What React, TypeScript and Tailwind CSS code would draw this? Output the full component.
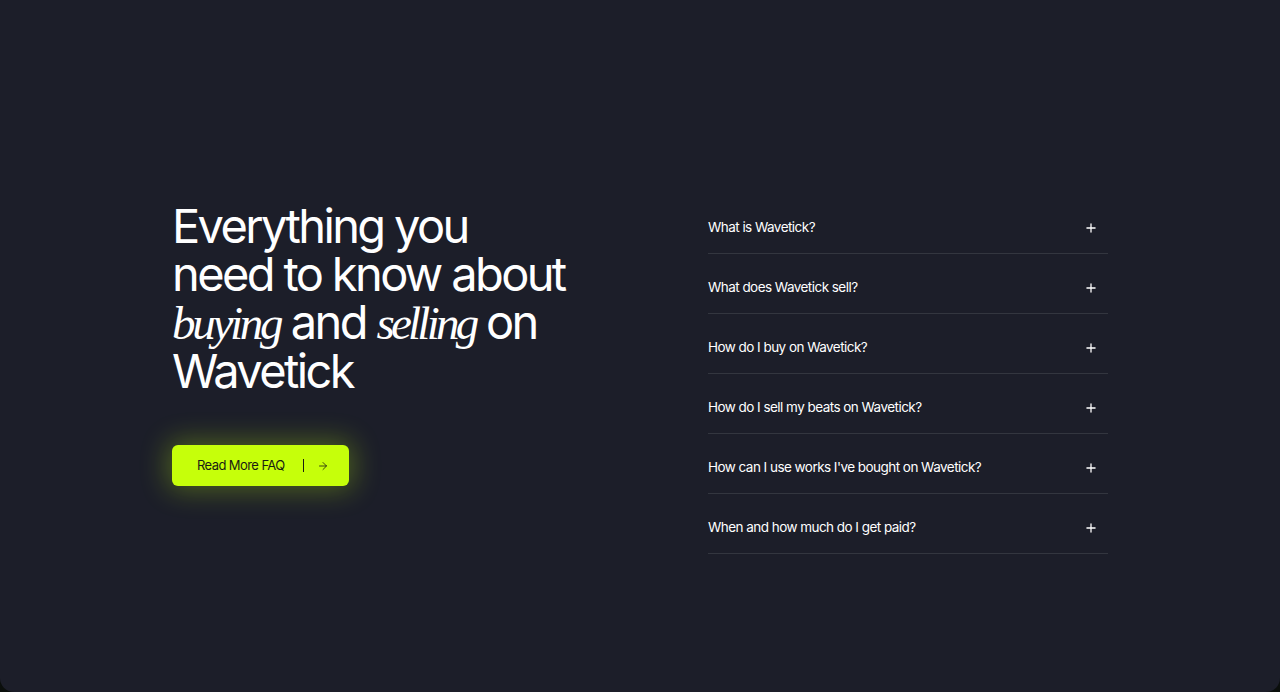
import React from "react";
import { Plus, ArrowRight } from "lucide-react";

const questions = [
  "What is Wavetick?",
  "What does Wavetick sell?",
  "How do I buy on Wavetick?",
  "How do I sell my beats on Wavetick?",
  "How can I use works I've bought on Wavetick?",
  "When and how much do I get paid?",
];

const serif = { fontFamily: "'Liberation Serif', serif" };

export default function App() {
  return (
    <div className="bg-[#0b0f0c] h-[692px] w-full">
      <div
        className="h-full w-full bg-[#1c1e29] rounded-b-[14px] overflow-hidden"
        style={{ fontFamily: "Inter, 'Noto Sans', sans-serif" }}
      >
        <div className="mx-auto w-[936px] pt-[194px] flex justify-between items-start">
          {/* Left: heading + CTA */}
          <div className="pt-[8px]">
            <h2 className="text-white text-[47px] leading-[48px] font-normal tracking-[-0.056em]">
              Everything you
              <br />
              need to know about
              <br />
              <span className="italic tracking-[-0.07em]" style={serif}>
                buying
              </span>{" "}
              and{" "}
              <span className="italic tracking-[-0.08em]" style={serif}>
                selling
              </span>{" "}
              on
              <br />
              Wavetick
            </h2>

            <button className="mt-[50px] h-[41px] w-[177px] rounded-[6px] bg-[#c6ff0a] shadow-[0_0_28px_4px_rgba(197,255,10,0.3)] flex items-center pl-[25px] text-[#1a1d12] text-[13px] tracking-[-0.045em]">
              <span>Read More FAQ</span>
              <span className="ml-[18px] h-[13px] w-px bg-[#1a1d12]" />
              <ArrowRight className="ml-[13px] h-[12px] w-[12px]" strokeWidth={1.6} />
            </button>
          </div>

          {/* Right: FAQ list */}
          <div className="w-[400px]">
            {questions.map((q) => (
              <div
                key={q}
                className="h-[60px] border-b border-[#33363f] flex items-center justify-between pt-[8px]"
              >
                <span className="text-white text-[13.5px] tracking-[-0.04em]">{q}</span>
                <Plus className="mr-[10px] h-[14px] w-[14px] text-white" strokeWidth={2.2} />
              </div>
            ))}
          </div>
        </div>
      </div>
    </div>
  );
}
